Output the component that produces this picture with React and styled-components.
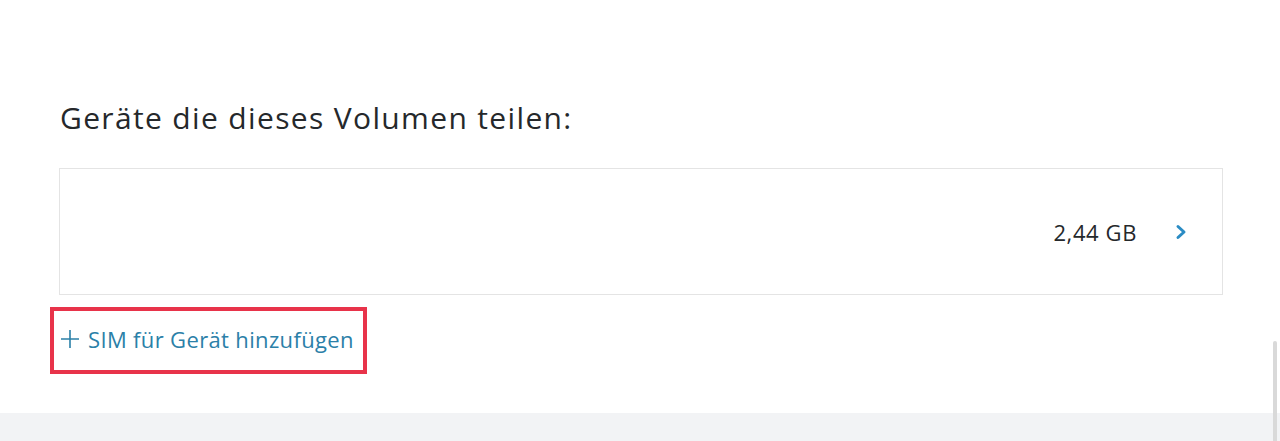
import React from "react";
import styled, { createGlobalStyle } from "styled-components";

const GlobalStyle = createGlobalStyle`
  html, body {
    margin: 0;
    padding: 0;
    background: #ffffff;
    font-family: "Open Sans", "Liberation Sans", sans-serif;
    color: #25282b;
  }
`;

const Page = styled.div`
  position: relative;
  width: 1280px;
  height: 441px;
  overflow: hidden;
  display: flex;
  flex-direction: column;
`;

const Section = styled.section`
  flex: 1;
  padding: 97px 57px 0 60px;
  display: flex;
  flex-direction: column;
`;

const Heading = styled.h2`
  margin: 0 0 29px 0;
  font-size: 30px;
  font-weight: 400;
  line-height: 42px;
  color: #25282b;
  letter-spacing: 1.35px;
`;

const Card = styled.div`
  height: 125px;
  margin-left: -1px;
  border: 1px solid #e4e4e4;
  display: flex;
  align-items: center;
  justify-content: flex-end;
  padding-right: 35px;
  gap: 38px;
`;

const Volume = styled.span`
  font-size: 22px;
  letter-spacing: 0.6px;
  color: #25282b;
`;

const Chevron = styled.svg`
  width: 12px;
  height: 16px;
  display: block;
`;

const AddRow = styled.div`
  margin-top: 12px;
  margin-left: -10px;
  align-self: flex-start;
  border: 4px solid #e8334a;
  padding: 15px 9px 18px 6px;
`;

const AddLink = styled.a`
  display: flex;
  align-items: center;
  gap: 8px;
  font-size: 22px;
  letter-spacing: 0.35px;
  color: #2b80a8;
  text-decoration: none;
  line-height: 26px;
`;

const Footer = styled.div`
  height: 28px;
  background: #f2f3f5;
`;

const Scrollbar = styled.div`
  position: absolute;
  right: 3px;
  bottom: 0;
  width: 4px;
  height: 100px;
  background: #d9d9d9;
  border-radius: 2px 2px 0 0;
`;

export default function App() {
  return (
    <Page>
      <GlobalStyle />
      <Section>
        <Heading>Geräte die dieses Volumen teilen:</Heading>
        <Card>
          <Volume>2,44 GB</Volume>
          <Chevron viewBox="0 0 12 16">
            <path d="M3 2.5 L9 8 L3 13.5" fill="none" stroke="#2b8cc4" strokeWidth="3" strokeLinecap="round" strokeLinejoin="round" />
          </Chevron>
        </Card>
        <AddRow>
          <AddLink href="#">
            <svg width="20" height="20" viewBox="0 0 20 20">
              <path d="M10 1 V19 M1 10 H19" stroke="#2b80a8" strokeWidth="1.6" />
            </svg>
            SIM für Gerät hinzufügen
          </AddLink>
        </AddRow>
      </Section>
      <Footer />
      <Scrollbar />
    </Page>
  );
}
